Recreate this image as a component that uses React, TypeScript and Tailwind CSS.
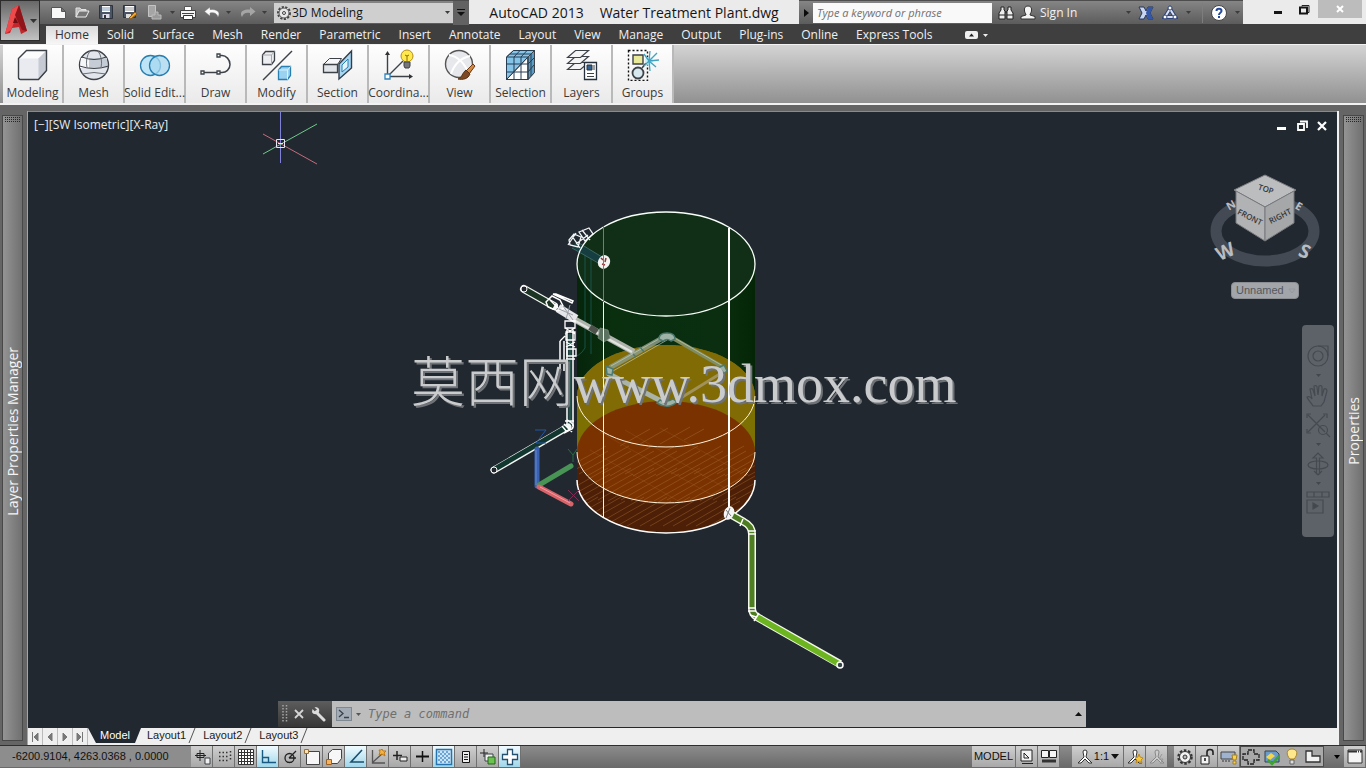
import { useState, type ReactNode } from "react"

type IconProps = { size?: number; children: ReactNode }

function Icon({ size = 32, children }: IconProps) {
  return (
    <svg width={size} height={size} viewBox={`0 0 ${size} ${size}`} fill="none" stroke="#3c4248" strokeWidth="1" aria-hidden="true">
      {children}
    </svg>
  )
}

const tabs = [
  "Home", "Solid", "Surface", "Mesh", "Render", "Parametric", "Insert", "Annotate",
  "Layout", "View", "Manage", "Output", "Plug-ins", "Online", "Express Tools",
]

const quickTools: { label: string; width: string; icon: ReactNode }[] = [
  {
    label: "New", width: "w-6",
    icon: <path d="M1.500 3.500h10l4 4v7h-14z M11.500 3.500v4h4" fill="#f8f8f8" stroke="#555" />,
  },
  {
    label: "Open", width: "w-6",
    icon: <><path d="M2 13V4h4l1 1.500h5V8" fill="#bbb" stroke="#e4e4e4" /><path d="M2 13l3-6h10l-3 6z" fill="#777" stroke="#ededed" /></>,
  },
  {
    label: "Save", width: "w-6",
    icon: <><path d="M1.500 1.500h13v13h-13z" fill="#4a5462" stroke="#2d333c" /><path d="M4 2h8v6H4z" fill="#fff" stroke="none" /><path d="M4 4h8M4 6h8" stroke="#7c95b5" /><path d="M4.500 10h7v4h-7z" fill="#dde" stroke="none" /><path d="M6 11h2v3H6z" fill="#333" stroke="none" /></>,
  },
  {
    label: "Save As", width: "w-6",
    icon: <><path d="M1.500 1.500h12v12h-12z" fill="#4a5462" stroke="#2d333c" /><path d="M3 2h9v6H3z" fill="#fff" stroke="none" /><path d="M3 4h9M3 6h9" stroke="#999" /><path d="M4 10h5v4H4z" fill="#ddd" stroke="none" /><path d="M7 14l6-6 2 2-6 5z" fill="#f5a623" stroke="#8a5a18" /></>,
  },
  {
    label: "Cloud options", width: "w-6",
    icon: <><path d="M2.500 1.500h7v11h-7z" fill="#a5a5a5" stroke="#c4c4c4" /><path d="M9 8h3v3h3v4H6v-4h3z" fill="#999" stroke="#bbb" /></>,
  },
]

function Caret({ label, className = "text-[#3c3c3c]" }: { label: string; className?: string }) {
  return (
    <button aria-label={label} className={`flex h-5 w-3 items-center justify-center ${className}`}>
      <svg width="5" height="3" viewBox="0 0 5 3" aria-hidden="true"><path d="M0 0h5L2.500 3z" fill="currentColor" /></svg>
    </button>
  )
}

function TitleBar() {
  return (
    <div className="flex h-6 w-full bg-[#ebebeb]">
      <div className="flex items-center border-t border-[#4d4d4d] bg-gradient-to-b from-[#858585] to-[#5c5c5c]">
        <div className="flex items-center pl-1.5">
          {quickTools.map((tool) => (
            <button key={tool.label} aria-label={tool.label} className={`flex ${tool.width} justify-center`}>
              <Icon size={17}>{tool.icon}</Icon>
            </button>
          ))}
        </div>
        <Caret label="Plot options" />
        <button aria-label="Plot" className="flex w-5 justify-center">
          <Icon size={16}>
            <path d="M4.500 1.500h7v5h-7z" fill="#fff" stroke="#555" />
            <path d="M.5 5.500h15v7H.5z" fill="#f4f4f4" stroke="#444" />
            <path d="M2 8.500h12" stroke="#444" />
            <path d="M3.500 10.500h9v4h-9z" fill="#fff" stroke="#333" />
          </Icon>
        </button>
        <button aria-label="Undo" className="ml-1 flex w-5 justify-center">
          <Icon size={16}><path d="M6 2L.5 6.500 6 11V8c4-1 7 .5 8 4 3-5-1-8-8-7.500z" fill="#fafafa" stroke="#777" strokeWidth=".5" /></Icon>
        </button>
        <Caret label="Undo history" />
        <button aria-label="Redo" className="ml-1 flex w-5 justify-center">
          <Icon size={16}><path d="M10 2l5.500 4.500L10 11V8c-4-1-7 .5-8 4-3-5 1-8 8-7.500z" fill="#a5a5a5" stroke="none" /></Icon>
        </button>
        <Caret label="Redo history" />
        <label className="ml-1 flex h-5 w-[179px] items-center bg-[#cfcfcf] pl-0.5">
          <Icon size={16}>
            <circle cx="8" cy="8" r="6" fill="#e8e8e8" stroke="#454545" strokeDasharray="2.200 1.400" strokeWidth="2" />
            <circle cx="8" cy="8" r="5" fill="#e8e8e8" stroke="#555" />
            <circle cx="8" cy="8" r="1.500" stroke="#444" />
          </Icon>
          <select aria-label="Workspace" className="h-5 grow appearance-none bg-transparent text-[12px] text-[#141414] outline-none">
            <option>3D Modeling</option>
          </select>
          <Caret label="Open workspace list" />
        </label>
        <button aria-label="Customize Quick Access Toolbar" className="flex h-6 w-4 items-center justify-center bg-[#626262]">
          <svg width="8" height="8" viewBox="0 0 8 8" aria-hidden="true"><path d="M0 0h8v1H0zM0 3h8L4 7z" fill="#111" /></svg>
        </button>
      </div>
      <h1 className="flex grow items-center justify-center gap-4 text-[14px] whitespace-nowrap text-[#161616]">
        <span>AutoCAD 2013</span>
        <span>Water Treatment Plant.dwg</span>
      </h1>
      <div className="flex w-[444px] items-center border-t border-[#4d4d4d] bg-gradient-to-b from-[#858585] to-[#5c5c5c]">
        <button aria-label="Collapse search" className="flex h-full w-3.5 items-center justify-center">
          <svg width="5" height="8" viewBox="0 0 5 8" aria-hidden="true"><path d="M0 0l5 4-5 4z" fill="#0b0b0b" /></svg>
        </button>
        <input
          aria-label="Search help"
          placeholder="Type a keyword or phrase"
          className="h-5 w-[179px] bg-[#f9f9f9] px-1 text-[11px] italic outline-none placeholder:text-[#707070]"
        />
        <button aria-label="Search" className="ml-1 flex w-5 justify-center">
          <Icon size={16}>
            <path d="M3 2h3v3l1 1v8H1V8l2-3zM10 2h3v3l2 3v6H9V6l1-1z" fill="#eee" stroke="#222" />
            <path d="M7 7h2M1 10h6M9 10h6" stroke="#222" />
          </Icon>
        </button>
        <button className="ml-1 flex items-center gap-1 text-[12px] text-[#f2f2f2]">
          <Icon size={16}>
            <path d="M8 1c3 0 4 2 3.500 5-.3 2-1.500 2.500-1.500 4l5 1.500V14H1v-2.500L6 10C6 8.500 4.800 8 4.500 6 4 3 5 1 8 1z" fill="#f5f5f5" stroke="#333" />
          </Icon>
          Sign In
        </button>
        <div className="ml-auto flex items-center">
          <Caret label="Account menu" />
          <button aria-label="Exchange Apps" className="flex w-6 justify-center">
            <Icon size={16}>
              <path d="M1 2h5l2 4 2-4h5l-3 6 3 6h-5l-2-4-2 4H1l3-6z" fill="#c9d5ee" stroke="#23345f" />
              <path d="M10 2h5l-3 6 3 6h-5L8 8z" fill="#3457a8" stroke="none" />
            </Icon>
          </button>
          <button aria-label="Stay Connected" className="flex w-6 justify-center">
            <Icon size={16}>
              <path d="M8 4l5 8H3z" stroke="#2f4376" strokeWidth="4" /><path d="M8 4l5 8H3z" stroke="#d9e1f2" strokeWidth="2" />
              <g fill="#fff" stroke="#2f4376"><circle cx="8" cy="3" r="2" /><circle cx="3" cy="12" r="2" /><circle cx="13" cy="12" r="2" /></g>
            </Icon>
          </button>
          <Caret label="Connect menu" />
          <span className="ml-2 h-5 w-px bg-[#7d7d7d]" />
          <button aria-label="Help" className="mr-0.5 ml-1.5 flex w-5 justify-center">
            <Icon size={16}>
              <circle cx="8" cy="8" r="7.500" fill="#fff" stroke="#444" />
              <path d="M5.500 6C5.500 3 10.500 3 10.500 6 10.500 8 8 7.500 8 10M8 11v2" stroke="#234a9c" strokeWidth="2" />
            </Icon>
          </button>
          <Caret label="Help menu" />
        </div>
      </div>
      <div className="flex w-[123px] items-start justify-end pr-1">
        <button aria-label="Minimize" className="flex h-[18px] w-7 items-center justify-center"><span className="mt-1.5 h-[3px] w-2 bg-[#151515]" /></button>
        <button aria-label="Restore" className="flex h-[18px] w-6 items-center justify-center">
          <Icon size={11}><path d="M3 2.500V1.500h7v7H8.500" stroke="#222" /><path d="M1 3.500h7v6H1z" stroke="#151515" strokeWidth="2" /></Icon>
        </button>
        <button aria-label="Close" className="ml-0.5 flex h-[18px] w-11 items-center justify-center bg-[#bcbcbc]">
          <Icon size={8}><path d="M1 1l6 6M7 1L1 7" stroke="#fff" strokeWidth="2" /></Icon>
        </button>
      </div>
    </div>
  )
}

const panels: { label: string; icon: ReactNode }[] = [
  {
    label: "Modeling",
    icon: <><path d="M1.500 9.500l8-8h20v20l-8 9h-18a2 2 0 01-2-2z" fill="#e9ebf0" /><path d="M1.500 9.500l8-8h20l-8 8z" fill="#fcfcfd" stroke="none" /><path d="M21.500 30.500v-21l8-8v20z" fill="#c5cad3" stroke="none" /><path d="M1.500 9.500l8-8h20v20l-8 9h-18a2 2 0 01-2-2z" strokeWidth="1.400" /></>,
  },
  {
    label: "Mesh",
    icon: <><circle cx="16" cy="16" r="14.500" fill="#e2e6ec" strokeWidth="1.400" /><path d="M3 9h26v10H2z" fill="#c5ccd6" stroke="none" /><path d="M3 9h8v10H2z" fill="#f7f7f7" stroke="none" /><path d="M4 8q12 5 24 0M1.500 17q14.500 5 29 0" /><path d="M4 25q12-3 24 0M12 2Q7 9 9 19M20 2q5 7 3 17" stroke="#6b7178" /></>,
  },
  {
    label: "Solid Edit...",
    icon: <g stroke="#277eb0" strokeWidth="1.300"><circle cx="11.500" cy="16.500" r="10" fill="#bde4f7" /><circle cx="20.500" cy="16.500" r="10" fill="#a8d8f0" fillOpacity=".75" /></g>,
  },
  {
    label: "Draw",
    icon: <><path d="M2 23.500h16M19 6.500h3c4 0 8 4 8 9s-4 8-8 8h-3" strokeWidth="1.500" /><g fill="#fff"><path d="M1 22h3v3H1zM17 22h3v3h-3zM17 5h3v3h-3z" strokeWidth="1.300" /></g></>,
  },
  {
    label: "Modify",
    icon: <><path d="M2 31L31 2" strokeWidth="1.400" /><path d="M1.500 6l3-3.500h9v9l-3 4h-9z" fill="#eceef2" strokeWidth="1.300" /><path d="M1.500 6h9m0 9.500V6l3-3.500" stroke="#aaa" /><g stroke="#277eb0"><path d="M17.500 21l3-3.500h9v9l-3 4h-9z" fill="#9bd2f0" strokeWidth="1.300" /><path d="M17.500 21h9v9.500m0-9.500l3-3.500" stroke="#d8f1ff" /></g></>,
  },
  {
    label: "Section",
    icon: <><path d="M1.500 15.500l6-6h12l-4 6z" fill="#f8f8fa" /><path d="M1.500 15.500h14v8h-14z" fill="#e1e4e9" strokeWidth="1.300" /><path d="M17 15L29.500 2v17L17 30z" fill="#a9d7f1" stroke="#303d4c" strokeWidth="1.400" /><path d="M20 16l6-6v8l-6 5z" fill="#e3f4fe" stroke="#277eb0" /></>,
  },
  {
    label: "Coordina...",
    icon: <><path d="M4.500 27V4M6 27.500h22M6 26L20 12" strokeWidth="1.400" /><path d="M2 6l2.500-4L7 6zM26 25l4 2.500-4 2.500z" fill="#333" stroke="none" /><path d="M2 25h5v5H2z" fill="#fff" stroke="#2e83bd" strokeWidth="1.300" /><circle cx="24" cy="7" r="6" fill="#ffe94d" stroke="#b58e16" /><path d="M21 13h6v4l-1 2h-4l-1-2z" fill="#777" /><path d="M24 13V7l-2-1m2 1l2-1" stroke="#8a6a00" /></>,
  },
  {
    label: "View",
    icon: <><circle cx="15" cy="15" r="13.500" fill="#e6e8ec" stroke="#555" strokeWidth="1.400" /><path d="M5 6q13 2 20 19M26 7Q12 10 7 25" stroke="#fff" strokeWidth="2" /><path d="M29 15l2 2-6 8-3-3z" fill="#d48a42" stroke="#6c3913" /><path d="M22 21l4 4c-2 5-7 6-12 5 4-1 4-6 8-9z" fill="#7c4924" stroke="#57300f" /></>,
  },
  {
    label: "Selection",
    icon: <><path d="M1.500 8l7-6.500h21v22L23 30.500H1.500z" fill="#86c4e8" /><path d="M1.500 30.500L23 8v22.500z" fill="#fff" /><path d="M23 8l6.500-6.500v22L23 30.500z" fill="#5c9cc4" /><path d="M1.500 8H23v22.500H1.500zM1.500 8l7-6.500h21M9 8l6-6.500M16 8l6-6.500M9 8v22M16 8v22M2 15h21l6-6M2 23h21l6-7M1.500 30.500L23 8M5 5h21v22" stroke="#263e54" /></>,
  },
  {
    label: "Layers",
    icon: <><g fill="#f5f5f5" strokeWidth="1.200"><path d="M1.500 20.500l8-7h13l-8 7z" /><path d="M1.500 14.500l8-7h13l-8 7z" /><path d="M1.500 8.500l8-7h13l-8 7z" /></g><path d="M18.500 13.500h12v17h-12z" fill="#fff" stroke="#26313d" strokeWidth="1.300" /><path d="M21 16h5v5h-5z" fill="#33618d" stroke="#26313d" /><path d="M28 16v5M21 24.500h7M21 27.500h7" /></>,
  },
  {
    label: "Groups",
    icon: <><path d="M1.500 1.500h19v30h-19z" stroke="#111" strokeDasharray="2 2" strokeWidth="1.400" /><path d="M6 6h10v9H6z" fill="#e9e99a" strokeWidth="1.400" /><circle cx="11" cy="24" r="5.500" fill="#d7e9ef" strokeWidth="1.800" /><path d="M15 19l4-5" strokeWidth="1.500" /><circle cx="22" cy="12" r="4" fill="#c7f1fa" stroke="none" /><path d="M22 12l10-1M22 12l8-8M22 12l1-10M22 12l7 6M22 12l1 10M22 12l-5-7M22 12l-5 5" stroke="#41a3bf" strokeWidth="1.300" /></>,
  },
]

function Header() {
  const [active, setActive] = useState("Home")
  return (
    <header className="flex h-11 shrink-0 bg-[#3f3f3f]">
      <button aria-label="Application menu" className="flex h-[41px] w-10 shrink-0 items-center border border-[#2c2c2c] bg-gradient-to-b from-[#686868] to-[#c2c2c2]">
        <svg width="38" height="38" viewBox="0 0 38 38" aria-hidden="true">
          <path d="M4 32L11 7l7-4 8 26-6 3-2-7-7 1-2 5z" fill="#c1272d" />
          <path d="M11 7l7-4-3 13-5 12-6 4z" fill="#ee4a4c" />
          <path d="M18 3l8 26-5-1-7-15z" fill="#8f1419" />
          <path d="M12 21l2-6 3 6z" fill="#6d0e12" />
          <path d="M29 17h7l-3.500 4z" fill="#333" />
        </svg>
      </button>
      <div className="flex min-w-0 grow flex-col">
        <TitleBar />
        <nav className="flex h-5 items-end pl-1.5 text-[12px] whitespace-nowrap text-[#f0f0f0]">
          {tabs.map((tab) => (
            <button
              key={tab}
              onClick={() => setActive(tab)}
              className={`h-[18px] px-[9px] leading-4 ${tab === active ? "bg-gradient-to-b from-[#dadada] to-[#f6f6f6] text-[#333]" : ""}`}
            >
              {tab}
            </button>
          ))}
          <button aria-label="Minimize ribbon" className="ml-6 flex h-[18px] items-center gap-1">
            <svg width="24" height="8" viewBox="0 0 24 8" aria-hidden="true">
              <rect width="13" height="8" rx="2" fill="#f0f0f0" /><path d="M4 5.500h5L6.500 2.500z" fill="#222" /><path d="M18 3h5l-2.500 3z" fill="#eee" />
            </svg>
          </button>
        </nav>
      </div>
    </header>
  )
}

function Ribbon() {
  return (
    <div className="flex h-[61px] shrink-0 border-b-2 border-t border-[#f2f2f2] bg-gradient-to-b from-[#d4d4d4] to-[#919191] pl-[3px]">
      {panels.map((panel) => (
        <button
          key={panel.label}
          className="flex w-[61px] shrink-0 flex-col items-center border-r-2 border-[#b9b9b9] bg-gradient-to-b from-[#fefefe] to-[#eaeaea] pt-1 text-[12px] text-[#3a3a3a]"
        >
          <Icon>{panel.icon}</Icon>
          <span className="mt-1 leading-4 whitespace-nowrap">{panel.label}</span>
        </button>
      ))}
    </div>
  )
}

function Palette({ title, className }: { title: string; className: string }) {
  return (
    <aside className={`flex shrink-0 bg-[#656565] py-1 ${className}`}>
      <div className="flex w-[21px] flex-col items-center border border-[#484848] bg-gradient-to-r from-[#949494] to-[#707070]">
        <svg width="15" height="5" viewBox="0 0 15 5" className="mt-px" aria-hidden="true">
          <path d="M0 .5h15M0 2.500h15M0 4.500h15" stroke="#262626" strokeDasharray="1 1" />
        </svg>
        <div className="flex grow items-center">
          <h2 className="rotate-180 text-[14px] leading-5 whitespace-nowrap text-[#f4f4f4] [writing-mode:vertical-rl]">{title}</h2>
        </div>
      </div>
    </aside>
  )
}

// Sludge hatch: broken parallel strokes clipped to the bottom of the tank
const hatch = Array.from({ length: 10 }, (_, i) => 556 + i * 23)

function Drawing() {
  return (
    <svg viewBox="28 112 1309 616" className="absolute inset-0 h-full w-full" fill="none" role="img" aria-label="Water treatment plant model">
      <defs>
        <clipPath id="sludge"><path d="M577 452a89 51 0 01178 0v30a89 51 0 01-178 0z" /></clipPath>
        <linearGradient id="green" x1="0" x2="1" y1="0" y2="0">
          <stop offset="0" stopColor="#06250b" /><stop offset=".2" stopColor="#092f0f" /><stop offset=".8" stopColor="#0a2e0f" /><stop offset="1" stopColor="#042607" />
        </linearGradient>
      </defs>

      {/* cursor */}
      <path d="M280.500 112v51" stroke="#7f80d8" />
      <path d="M263 134l54 30" stroke="#c76b7c" />
      <path d="M263 154l54-30" stroke="#6fc98a" />
      <path d="M276.500 139.500h8v8h-8zM278 143.500h5" stroke="#e8e8f4" />

      {/* tank */}
      <path d="M577 264a89 52 0 01178 0v132H577z" fill="url(#green)" />
      <ellipse cx="666" cy="264" rx="89" ry="52" fill="#112f17" />
      <path d="M577 396a89 51 0 01178 0v56H577z" fill="#7c7003" />
      <ellipse cx="666" cy="396" rx="89" ry="51" fill="#806b04" />
      <path d="M577 452h178v30a89 51 0 01-178 0z" fill="#4d1f06" />
      <ellipse cx="666" cy="452" rx="89" ry="51" fill="#7a3200" />
      <g clipPath="url(#sludge)" stroke="#b0783c" strokeOpacity=".38">
        {hatch.map((x) => (
          <path key={x} d={`M${x} 474l50-28M${x + 8} 476l44-25M${x - 4} 500l56-32M${x + 6} 501l48-27M${x - 8} 526l50-29M${x + 2} 526l44-25`} />
        ))}
        <path d="M620 446l30-17M640 444l28-16M660 444l30-17M684 440l20-11" />
        <path d="M600 432l110 62M625 430l100 58M660 428l80 44M590 450l90 52" strokeOpacity=".2" />
      </g>
      <path d="M585 250v98q-6 10-14 8M591 250v104" stroke="#1f6f72" strokeOpacity=".6" />

      {/* inner distributor ring */}
      <g stroke="#8b9b86" strokeWidth="5" strokeLinecap="round">
        <path d="M611 367l55-31" strokeOpacity=".85" />
        <path d="M671 337l52 30" stroke="#7f8c60" strokeWidth="4" />
        <path d="M609 374l56 29" stroke="#a9b3a8" />
        <path d="M671 404l52-32" stroke="#a0925a" strokeWidth="3" />
      </g>
      <path d="M611 366l55-31M613 371l54-31M671 336l52 30" stroke="#cdd6cb" strokeOpacity=".6" />
      <g stroke="#4d7a70" strokeWidth="1.500" fill="#9fb3a6">
        <path d="M659 339q0-6 8-6t8 6l-4 2q-4-3-8 0z" />
        <path d="M718 368l6-3 3 6-5 4zM606 366l7 3-1 6-5-1z" />
        <path d="M657 403q11 7 20-1l-4-3q-6 4-13 1z" />
        <path d="M631 352l5 5M640 347l4 5" />
      </g>

      {/* feed pipe with valve */}
      <path d="M524 289l30 17" stroke="#f4f7f4" strokeWidth="8" strokeLinecap="round" />
      <path d="M524 289l30 17" stroke="#1b3423" strokeWidth="5.500" />
      <circle cx="524" cy="289" r="3" stroke="#fff" fill="#22272f" />
      <path d="M572 318l62 34" stroke="#aeb3ab" strokeWidth="6" />
      <path d="M570 318l62 34" stroke="#e2e4df" strokeWidth="2" />
      <path d="M590 327l7 5" stroke="#4d534c" strokeWidth="6" />
      <path d="M600 328l8 2 2 8-6 4-6-4z" fill="#5c7260" stroke="#7c8d7d" strokeOpacity=".7" />
      <path d="M558 308l18 11" stroke="#e6e6ea" strokeWidth="9" />
      <path d="M546 302l6-6 8 4 4 8-6 3-10-4zM550 300l8 8M553 294l19 9 1-2-17-7z" stroke="#fff" strokeWidth="1.500" />
      <path d="M563 306l10 14M570 305l-4 14M559 309l14 6" stroke="#9ba0a8" />

      {/* outlet valve at the rim */}
      <path d="M574 245l29 16" stroke="#163e40" strokeWidth="7" />
      <path d="M574 240l28 17M572 248l28 16" stroke="#3c6664" />
      <path d="M569 240l5-6 7 3-3 10-8-2zM579 232l10-4 4 6-8 7zM572 236l8 12M582 230l8 10M576 244l12-9M568 245l8-12" stroke="#f1f5f6" strokeWidth="1.300" />
      <ellipse cx="604" cy="262" rx="6" ry="7" fill="#f2f2f2" transform="rotate(20 604 262)" />
      <path d="M601 258l2 2m3-2l-1 4m-3 2l3 1" stroke="#8e3636" strokeWidth="1.500" />

      {/* drop pipe */}
      <path d="M567 330v96M573 330v96M560 341v32M564 341v30" stroke="#fff" strokeWidth="1.500" />
      <path d="M570 334v92" stroke="#25534a" strokeWidth="3" />
      <path d="M565 321h10v7h-10zM566 332h9v8h-9zM560 341l5-5M567 349h9v7h-9zM566 359h9M565 328l10 6M575 328l-10 6M566 342l9 5M575 342l-9 5" stroke="#fff" strokeWidth="1.300" />
      <path d="M494 470l74-43" stroke="#f3f6f4" strokeWidth="7" strokeLinecap="round" />
      <path d="M495 469l72-42" stroke="#12372f" strokeWidth="5" />
      <circle cx="494" cy="470" r="3" stroke="#fff" fill="#22272f" />
      <path d="M565 421h9M564 424l8 8M567 420q9 4 5 9l-8 4M562 426l5 6" stroke="#fff" strokeWidth="1.500" />

      {/* edges */}
      <ellipse cx="666" cy="264" rx="89" ry="52" stroke="#f8fff8" strokeWidth="1.300" />
      <path d="M577 396a89 51 0 00178 0M577 452a89 51 0 00178 0" stroke="#fff4dc" />
      <path d="M577 480a89 53 0 00178 0" stroke="#fff" strokeWidth="1.500" />
      <path d="M603.500 226v76" stroke="#5f8a66" />
      <path d="M603.500 302v215" stroke="#f4f4ee" />
      <path d="M729 228v282" stroke="#fff" strokeWidth="2" />

      {/* drain pipe */}
      <path d="M730 514l14 8q8 4 8 12v74q0 6 5 9l83 47" stroke="#f4f9ea" strokeWidth="8" />
      <path d="M730 514l14 8q8 4 8 12v74q0 6 5 9" stroke="#4e7c20" strokeWidth="5" />
      <path d="M757 617l82 47" stroke="#6cb420" strokeWidth="6" />
      <ellipse cx="729" cy="513" rx="5" ry="7" fill="#f5f5f5" transform="rotate(20 729 513)" />
      <path d="M726 510l5 6M730 508l-4 10" stroke="#777" />
      <path d="M743 519l-3 7M748 531h8M748 534h8M748 608h8M748 611h8M754 621l5-8M750 615l6 2" stroke="#fff" strokeWidth="1.500" />
      <circle cx="840" cy="665" r="3" stroke="#fff" strokeWidth="1.500" fill="#344" />

      {/* UCS tripod */}
      <g strokeLinecap="round" strokeWidth="5">
        <path d="M537 486V449" stroke="#3a62b4" /><path d="M539 485l32-19" stroke="#479455" /><path d="M539 487l32 17" stroke="#d9636b" />
      </g>
      <path d="M536 485v-35" stroke="#6688cc" />
      <path d="M540 487l30 16" stroke="#f29ba0" />
      <path d="M535 430h11l-10 13h10" stroke="#2356a8" />
      <path d="M568 449l5 6 4-6M573 455v7" stroke="#2b6b45" />
      <path d="M568 490l11 11M579 490l-11 11" stroke="#7d2f55" />

      <text
        x="411" y="402" fontSize="54" fill="#c9cbcd"
        className="font-['Liberation_Serif','Noto_Sans_CJK_SC',serif] font-light [text-shadow:2px_2px_0_#6f7377]"
      >
        莫西网www.3dmox.com
      </text>

      {/* view cube */}
      <g className="font-['Open_Sans',sans-serif]" textAnchor="middle">
        <ellipse cx="1265" cy="231" rx="49" ry="30" stroke="#434a53" strokeWidth="11" />
        <g fill="#b9bcc0" fontWeight="700">
          <text x="1231" y="209" fontSize="11" transform="rotate(-30 1231 205)">N</text>
          <text x="1299" y="210" fontSize="11" transform="rotate(30 1299 206)">E</text>
          <text x="1225" y="258" fontSize="19" transform="rotate(-24 1225 251)">W</text>
          <text x="1305" y="258" fontSize="19" transform="rotate(24 1305 251)">S</text>
        </g>
        <path d="M1265 175l31 15-31 17-31-17z" fill="#bcbdbf" stroke="#7c7e81" />
        <path d="M1236 191l29 16v34l-29-18z" fill="#b1b2b4" stroke="#77797c" />
        <path d="M1294 191l-29 16v34l29-18z" fill="#a5a7a9" stroke="#77797c" />
        <g fill="#35373a" fontWeight="600" fontSize="8">
          <text x="1266" y="192" transform="rotate(18 1266 189)">TOP</text>
          <text x="1250" y="220" transform="rotate(27 1250 217)">FRONT</text>
          <text x="1280" y="219" transform="rotate(-27 1280 216)">RIGHT</text>
        </g>
      </g>
    </svg>
  )
}

const navTools: { label: string; caret: boolean; icon: ReactNode }[] = [
  { label: "Full Navigation Wheel", caret: true, icon: <><circle cx="13" cy="13" r="10" /><circle cx="13" cy="13" r="5" /><path d="M13 3h10v10" /></> },
  { label: "Pan", caret: false, icon: <path d="M8 24c-2-4-5-6-6-9 2-1 4 0 5 2L5 7c2-1 3 0 3 1l2 6-1-10c2-1 3 0 3 1l1 8 1-9c2-1 3 0 3 1v9l2-7c2-1 3 1 3 2l-3 11-3 4z" /> },
  { label: "Zoom Extents", caret: true, icon: <><path d="M3 3l17 17M20 3L3 20M2 6V2h4M18 2h4v4M2 17v4h4" /><circle cx="18" cy="18" r="4.500" /><path d="M21 21l4 4" /></> },
  { label: "Orbit", caret: true, icon: <><path d="M11.500 23V7H8l5-5 5 5h-3.500v16zM9 20l4 4 4-4" /><ellipse cx="13" cy="14" rx="10" ry="4" /></> },
  { label: "ShowMotion", caret: false, icon: <><path d="M2 2h22v5H2zM9 2v5M17 2v5M2 10h16v13H2z" /><path d="M8 13l5 3-5 3z" fill="#42474e" /></> },
]

function Viewport() {
  return (
    <section className="relative min-h-0 grow overflow-hidden border-t border-[#8a8a8a] bg-[#212830]">
      <Drawing />
      <div className="absolute top-[5px] left-1.5 text-[12px] leading-4 text-[#e9ebed]">
        <button>[−]</button><button>[SW Isometric]</button><button>[X-Ray]</button>
      </div>
      <div className="absolute top-2 right-[9px] flex gap-2 text-white">
        <button aria-label="Minimize drawing"><Icon size={12}><path d="M1 8.500h9" stroke="#fff" strokeWidth="3" /></Icon></button>
        <button aria-label="Restore drawing"><Icon size={12}><path d="M2 4h6v6H2zM4 1.500h7V8" stroke="#fff" strokeWidth="1.800" /></Icon></button>
        <button aria-label="Close drawing"><Icon size={12}><path d="M2 2l8 8M10 2l-8 8" stroke="#fff" strokeWidth="2.200" /></Icon></button>
      </div>
      <button className="absolute top-[170px] right-[38px] flex h-[17px] w-[68px] items-center gap-1 rounded-sm border border-[#8b8e92] bg-[#a2a5a9] pl-1 font-['Liberation_Sans',sans-serif] text-[11px] text-[#55585d]">
        Unnamed
        <svg width="8" height="6" viewBox="0 0 8 6" aria-hidden="true"><path d="M1 1h6L4 5z" stroke="#969a9e" fill="none" /></svg>
      </button>
      <div className="absolute top-[213px] right-[3px] flex h-[212px] w-8 flex-col items-center rounded bg-[#5d6269] pt-[18px]">
        {navTools.map((tool) => (
          <button key={tool.label} aria-label={tool.label} className="flex flex-col items-center">
            <svg width="26" height="26" viewBox="0 0 26 26" fill="none" stroke="#454a51" strokeWidth="1.200" aria-hidden="true">{tool.icon}</svg>
            {tool.caret ? (
              <svg width="26" height="13" viewBox="0 0 26 13" aria-hidden="true"><path d="M11 5h5l-2.500 3z" fill="#42474e" /></svg>
            ) : <span className="h-1" />}
          </button>
        ))}
      </div>
      <form className="absolute right-[251px] bottom-px left-[250px] flex h-[26px]" onSubmit={(e) => e.preventDefault()}>
        <div className="flex w-[54px] items-center gap-1.5 bg-gradient-to-b from-[#5d5d5d] to-[#373737] pl-1">
          <svg width="6" height="18" viewBox="0 0 6 18" aria-hidden="true"><path d="M1 0v18M4.500 0v18" stroke="#a5a5a5" strokeWidth="1.500" strokeDasharray="1.500 1.500" /></svg>
          <button type="button" aria-label="Close command line"><Icon size={10}><path d="M1 1l8 8M9 1L1 9" stroke="#d5d5d5" strokeWidth="1.800" /></Icon></button>
          <button type="button" aria-label="Customize">
            <Icon size={16}><path d="M6 6l8 8" stroke="#dcdcdc" strokeWidth="3" strokeLinecap="round" /><path d="M2.500 3L5 5.500 7 3.500 4.500 1.500C8 .5 10 3 9 6 8 9 3 9 2 6z" fill="#dcdcdc" stroke="none" /></Icon>
          </button>
        </div>
        <div className="flex grow items-center bg-[#bdbdbd] pr-1 pl-1">
          <svg width="16" height="14" viewBox="0 0 16 14" aria-hidden="true"><rect x=".5" y=".5" width="15" height="13" fill="#a3abb7" stroke="#7f8791" /><path d="M3 3l4 3.500L3 10M8 10.500h5" stroke="#39414c" fill="none" strokeWidth="1.300" /></svg>
          <Caret label="Recent commands" className="text-[#555]" />
          <input aria-label="Command" placeholder="Type a command" className="h-full grow bg-transparent pl-1 font-['DejaVu_Sans_Mono',monospace] text-[12px] italic outline-none placeholder:text-[#6f6f6f]" />
          <button type="button" aria-label="Command history"><svg width="7" height="4" viewBox="0 0 7 4" aria-hidden="true"><path d="M0 4h7L3.500 0z" fill="#111" /></svg></button>
        </div>
      </form>
    </section>
  )
}

const arrows = [
  { label: "First layout", d: "M4.500 2v10M10 3v8L6 7z" },
  { label: "Previous layout", d: "M9 3v8L5 7z" },
  { label: "Next layout", d: "M5 3v8l4-4z" },
  { label: "Last layout", d: "M4 3v8l4-4zM9.500 2v10" },
]

function LayoutTabs() {
  const [active, setActive] = useState("Model")
  return (
    <div className="flex h-[17px] shrink-0 bg-[#efefef] font-['Liberation_Sans',sans-serif] text-[11px]">
      {arrows.map((arrow) => (
        <button key={arrow.label} aria-label={arrow.label} className="flex w-[15px] items-center justify-center border-r border-[#bbb]">
          <svg width="14" height="14" viewBox="0 0 14 14" aria-hidden="true"><path d={arrow.d} fill="#777" stroke="#777" /></svg>
        </button>
      ))}
      {["Model", "Layout1", "Layout2", "Layout3"].map((tab) => (
        <button key={tab} onClick={() => setActive(tab)} className="flex h-[15px]">
          {tab === active && <svg width="8" height="15" viewBox="0 0 8 15" aria-hidden="true"><path d="M0 0h8v15z" fill="#212830" /></svg>}
          <span className={`h-[15px] pl-1 leading-[15px] ${tab === active ? "bg-[#212830] text-white" : "text-[#1a1a1a]"}`}>{tab}</span>
          <svg width="13" height="15" viewBox="0 0 13 15" aria-hidden="true">
            {tab === active ? <path d="M0 0h11L5 15H0z" fill="#212830" /> : <path d="M9 0L3 15" stroke="#555" />}
          </svg>
        </button>
      ))}
    </div>
  )
}

const modes: { label: string; on: boolean; icon: ReactNode }[] = [
  { label: "Infer Constraints", on: false, icon: <><path d="M7 2v11M2 7.500h11M4 5.500h7v4H4z" stroke="#222" /><path d="M12 10h5v6h-5z" fill="#eee" /></> },
  { label: "Snap Mode", on: false, icon: <path d="M4 4.500h10M4 8.500h10M4 12.500h10M15.500 3v9" stroke="#333" strokeWidth="1.500" strokeDasharray="1.500 2" /> },
  { label: "Grid Display", on: false, icon: <path d="M1.500 1.500h15v15h-15zM4.500 2v14M7.500 2v14M10.500 2v14M13.500 2v14M2 4.500h15M2 7.500h15M2 10.500h15M2 13.500h15" fill="#fff" stroke="#333" /> },
  { label: "Ortho Mode", on: true, icon: <path d="M3.500 2v12.500H17M3.500 9.500h6v5" stroke="#195a82" strokeWidth="1.400" /> },
  { label: "Polar Tracking", on: false, icon: <><circle cx="8.500" cy="10" r="4.500" stroke="#222" strokeWidth="1.300" /><path d="M8 10l7-7M8 10h7" stroke="#222" strokeWidth="1.300" /></> },
  { label: "Object Snap", on: false, icon: <><path d="M3.500 3.500h13v13h-13z" fill="#f7f7f7" stroke="#444" /><path d="M1.500 1.500h4v4h-4z" fill="#f7e4b5" stroke="#9c7138" /></> },
  { label: "3D Object Snap", on: false, icon: <><path d="M3.500 5l4-3.500h9v9l-4 5h-9z" fill="#f7f7f7" stroke="#444" /><path d="M1.500 11.500h5v5h-5z" fill="#f4b35c" stroke="#9c6122" /></> },
  { label: "Object Snap Tracking", on: true, icon: <path d="M15 2L4 14h13" stroke="#19506e" strokeWidth="1.600" /> },
  { label: "Dynamic UCS", on: false, icon: <><path d="M3.500 2v13H16M4 14L14 5" stroke="#555" strokeWidth="1.300" /><path d="M13 1l1 2h3l-2 2 1 3-3-2-3 1 1-3-1-2h2z" fill="#f5b342" stroke="#bd7a17" /></> },
  { label: "Dynamic Input", on: false, icon: <><path d="M6 3v9M2 7.500h9" stroke="#222" strokeWidth="1.500" /><path d="M9 9h7v4H9z" fill="#eee" stroke="#222" /></> },
  { label: "Show Lineweight", on: false, icon: <><path d="M3 8.500h13" stroke="#111" strokeWidth="2" /><path d="M9.500 3v11" stroke="#111" strokeWidth="1.500" /></> },
  { label: "Show Transparency", on: true, icon: <><path d="M1.500 1.500h15v15h-15z" fill="#cce4f7" stroke="#2674ad" strokeWidth="1.500" /><path d="M3 4h12M5 6h10M3 8h12M5 10h10M3 12h12M5 14h10" stroke="#6ba6d6" strokeWidth="2" strokeDasharray="2 2" /></> },
  { label: "Quick Properties", on: false, icon: <path d="M5.500 3.500h7v11h-7zM7 6.500h4M7 9h4M7 11.500h4" fill="#eee" stroke="#111" /> },
  { label: "Selection Cycling", on: false, icon: <><path d="M5 1v8M1 5h8" stroke="#222" /><path d="M6 6h8v7H6z" fill="#eee" /><path d="M9 9h7v7H9z" fill="#6cc24f" stroke="#23641a" /></> },
  { label: "Annotation Monitor", on: true, icon: <path d="M6.500 1.500h5v5h5v5h-5v5h-5v-5h-5v-5h5z" fill="#fff" stroke="#24506f" strokeWidth="1.300" /> },
]

const person = "M9 2q2 0 2 2l-1 5 6 6h-3L9 11l-4 4H2l6-6-1-5q0-2 2-2z"

function StatusButton({ label, on, children }: { label: string; on?: boolean; children: ReactNode }) {
  return (
    <button
      aria-label={label}
      className={`flex h-[21px] w-[22px] items-center justify-center border-r border-[#707070] ${on ? "bg-gradient-to-b from-[#f1fbff] to-[#9fd6ea]" : "bg-gradient-to-b from-[#cfcfcf] to-[#a8a8a8]"}`}
    >
      <Icon size={18}>{children}</Icon>
    </button>
  )
}

function StatusBar() {
  return (
    <footer className="flex h-[23px] shrink-0 items-start border-t border-[#2f2f2f] bg-gradient-to-b from-[#8c8c8c] to-[#696969] font-['Liberation_Sans',sans-serif] text-[11px] text-[#111]">
      <div className="flex h-[21px] w-[191px] items-center bg-[#8d8d8d] pl-3">-6200.9104, 4263.0368 , 0.0000</div>
      {modes.map((mode) => <StatusButton key={mode.label} label={mode.label} on={mode.on}>{mode.icon}</StatusButton>)}
      <div className="ml-auto flex">
        <button className="h-[21px] w-11 border-r border-[#707070] bg-gradient-to-b from-[#cfcfcf] to-[#a8a8a8]">MODEL</button>
        <StatusButton label="Quick View Layouts"><path d="M3 2h11v11H3z" fill="#f4f4f4" stroke="#222" /><path d="M6 5v5h5zM4 15.500h11" stroke="#222" /></StatusButton>
        <StatusButton label="Quick View Drawings"><path d="M1.500 2.500h7v7h-7zM9.500 2.500h7v7h-7z" fill="#f4f4f4" stroke="#222" /><path d="M2 13h14" stroke="#333" strokeWidth="3" /></StatusButton>
        <button className="ml-3 flex h-[21px] w-[52px] items-center justify-center border-r border-[#707070] bg-gradient-to-b from-[#cfcfcf] to-[#a8a8a8]">
          <Icon size={18}><path d={person} fill="#fff" stroke="#333" /></Icon>
          1:1
          <svg width="8" height="5" viewBox="0 0 8 5" className="ml-0.5" aria-hidden="true"><path d="M0 0h8L4 5z" fill="#111" /></svg>
        </button>
        <StatusButton label="Annotation Visibility"><path d={person} fill="#fff" stroke="#333" /><path d="M13 6l1 3 3 1-2 2 1 3-3-2-3 2 1-3-2-2 3-1z" fill="#f8c93c" stroke="#c58b1a" /></StatusButton>
        <StatusButton label="Add Scales"><path d={person} fill="#ccc" stroke="#888" /><path d="M14 6l-3 5h4l-3 5" stroke="#999" /></StatusButton>
        <span className="w-1.5" />
        <StatusButton label="Workspace Switching"><circle cx="9" cy="9" r="6.500" stroke="#333" strokeWidth="2.500" strokeDasharray="2.500 1.600" /><circle cx="9" cy="9" r="5.500" fill="#f2f2f2" stroke="#333" /><circle cx="9" cy="9" r="2" fill="#bbb" stroke="#333" /></StatusButton>
        <StatusButton label="Toolbar Lock"><path d="M3 8h8v8H3z" fill="#f2f2f2" stroke="#222" /><path d="M9 8V4q0-2.500 3-2.500T15 4v3M7 10v3" stroke="#222" strokeWidth="1.600" /></StatusButton>
        <StatusButton label="Hardware Acceleration"><path d="M1 4h14v7H1z" fill="#9fb3d0" stroke="#444" /><path d="M3 12v2M6 12v2M9 12v2" stroke="#333" /><path d="M12 7h5l-1 5h-3zM13 13h3v3h-3z" fill="#f7d24c" stroke="#a97e1b" /></StatusButton>
        <div className="flex h-[21px] w-[84px] items-center justify-around border border-[#4c4c4c] bg-[#a9a9a9]">
          <button aria-label="Annotation monitor status"><Icon size={18}><path d="M6 2h6v4h5v6h-5v4H6v-4H1V6h5z" stroke="#222" strokeWidth="1.300" strokeDasharray="4 1" /></Icon></button>
          <button aria-label="Reference files"><Icon size={18}><path d="M2 3h11l3 3v8H2z" fill="#6a9ccb" stroke="#345" /><path d="M3 9l5-4 4 3-5 4z" fill="#f5d64b" stroke="none" /><path d="M5 12l4 4 7-8" stroke="#3da52f" strokeWidth="2.500" /></Icon></button>
          <button aria-label="Isolate objects"><Icon size={18}><path d="M9 1c6 0 6 6 2 10H7C3 7 3 1 9 1z" fill="#ffe78c" stroke="#a9852a" /><path d="M7 12h4v4H7z" fill="#ddd" stroke="#666" /></Icon></button>
          <button aria-label="Drawing status"><Icon size={18}><path d="M2 3h6v5h8v6H2z" fill="#f2f2f2" stroke="#333" strokeWidth="1.300" /></Icon></button>
        </div>
        <button aria-label="Status bar menu" className="flex h-[21px] w-5 items-center justify-end pr-1"><svg width="6" height="4" viewBox="0 0 6 4" aria-hidden="true"><path d="M0 0h6L3 4z" fill="#000" /></svg></button>
        <StatusButton label="Clean Screen"><path d="M2 2h14v13H2z" fill="#f5f5f5" stroke="#333" /><path d="M2 3.500h14" stroke="#333" strokeWidth="2" strokeDasharray="9 1 1 1" /></StatusButton>
      </div>
    </footer>
  )
}

export default function App() {
  return (
    <div className="flex h-screen flex-col overflow-hidden bg-[#656565] font-['Open_Sans',sans-serif] [&_svg]:shrink-0">
      <Header />
      <Ribbon />
      <main className="flex min-h-0 grow pt-1.5">
        <Palette title="Layer Properties Manager" className="w-[27px] pl-0.5" />
        <div className="flex min-w-0 grow flex-col border-r-2 border-l border-[#f0f0f0] border-l-[#a5a5a5]">
          <Viewport />
          <LayoutTabs />
        </div>
        <Palette title="Properties" className="w-[27px] pl-1" />
      </main>
      <StatusBar />
    </div>
  )
}
